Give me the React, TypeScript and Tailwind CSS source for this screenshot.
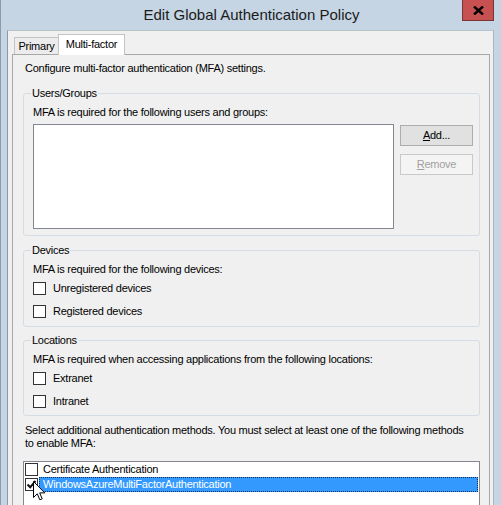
import React from "react";

function Box({ checked = false }: { checked?: boolean }) {
  return (
    <span className="w-[13px] h-[13px] shrink-0 border border-[#333333] bg-white flex items-center justify-center">
      {checked && (
        <svg width="11" height="11" viewBox="0 0 11 11">
          <path d="M1.5 5.5 L4.2 8.3 L9.5 2" fill="none" stroke="#111" strokeWidth="2" />
        </svg>
      )}
    </span>
  );
}

function Row({ label }: { label: string }) {
  return (
    <div className="h-[23px] flex items-center gap-[7px]">
      <Box />
      <span>{label}</span>
    </div>
  );
}

function Group({ title, className, children }: { title: string; className?: string; children: React.ReactNode }) {
  return (
    <fieldset className={"border border-[#d5dce3] rounded-[3px] pl-[9px] pr-[6px] " + (className ?? "")}>
      <legend className="ml-[-2px] px-[1px] leading-[13px]">{title}</legend>
      {children}
    </fieldset>
  );
}

export default function App() {
  return (
    <div className="relative w-[501px] h-[505px] overflow-hidden bg-[#c5d5e4] border-l border-[#8d9bab] flex flex-col font-['Liberation_Sans',Arial,sans-serif] text-[11px] tracking-[-0.25px] text-black">
      {/* title bar */}
      <div className="h-[30px] shrink-0 flex items-start">
        <div className="flex-1 pl-[40px] pt-[5px] text-center text-[15px] tracking-normal leading-[20px] text-[#1b1b1b]">
          Edit Global Authentication Policy
        </div>
        <div className="w-[32px] h-[21px] mr-[7px] bg-[#c75050] border border-t-0 border-[#7a3434] flex items-center justify-center">
          <svg width="11" height="9" viewBox="0 0 11 9">
            <path d="M1 0.5 L10 8.5 M10 0.5 L1 8.5" stroke="#000" strokeWidth="2.4" />
          </svg>
        </div>
      </div>

      {/* client area */}
      <div className="flex-1 ml-[6px] mr-[7px] bg-[#f0f0f0] border-l border-r border-t border-l-[#8e99a5] border-r-[#a9b4bf] border-t-[#b9c3cc] flex flex-col pt-[3px]">
        {/* tabs */}
        <div className="flex items-end pl-[6px] h-[20px]">
          <div className="w-[44px] h-[17px] bg-[#ececec] border-t border-l border-[#c4c4c4] flex items-center justify-center pt-[1px]">
            Primary
          </div>
          <div className="relative z-10 w-[67px] h-[21px] mb-[-1px] bg-white border-t border-l border-r border-[#c4c4c4] flex items-start justify-center pt-[3px] leading-[13px]">
            Multi-factor
          </div>
        </div>

        {/* tab page */}
        <div className="flex-1 ml-[4px] mr-[3px] border border-b-0 border-[#a8a8a8] pl-[10px] pr-[9px] pt-[7px] leading-[13px]">
          <div className="pl-[2px]">Configure multi-factor authentication (MFA) settings.</div>

          <Group title="Users/Groups" className="mt-[12px] pb-[6px]">
            <div className="mt-[6px]">MFA is required for the following users and groups:</div>
            <div className="mt-[5px] flex gap-[6px]">
              <div className="w-[361px] h-[105px] bg-white border border-[#828790]" />
              <div className="flex flex-col gap-[8px] pt-[1px]">
                <div className="w-[73px] h-[21px] bg-[#e1e1e1] border border-[#adadad] flex items-center justify-center">
                  <span>
                    <span className="underline">A</span>dd...
                  </span>
                </div>
                <div className="w-[73px] h-[21px] bg-[#f4f4f4] border border-[#c9c9c9] text-[#a0a0a0] flex items-center justify-center">
                  <span>
                    <span className="underline">R</span>emove
                  </span>
                </div>
              </div>
            </div>
          </Group>

          <Group title="Devices" className="mt-[8px] pb-[3px]">
            <div className="mt-[6px] mb-[1px]">MFA is required for the following devices:</div>
            <Row label="Unregistered devices" />
            <Row label="Registered devices" />
          </Group>

          <Group title="Locations" className="mt-[7px] pb-[2px]">
            <div className="mt-[6px] mb-[1px]">
              MFA is required when accessing applications from the following locations:
            </div>
            <Row label="Extranet" />
            <Row label="Intranet" />
          </Group>

          <div className="mt-[8px] pl-[2px]">
            Select additional authentication methods. You must select at least one of the following methods
            <br />
            to enable MFA:
          </div>

          <div className="mt-[11px] h-[60px] bg-white border border-[#828790] pl-[1px] pr-[1px]">
            <div className="h-[15px] flex items-center">
              <Box />
              <span className="pl-[5px]">Certificate Authentication</span>
            </div>
            <div className="h-[15px] flex items-center">
              <Box checked />
              <div className="ml-[1px] flex-1 h-[15px] bg-[#3399ff] border border-dotted border-[#0b2d5c] text-white pl-[3px] flex items-center">
                WindowsAzureMultiFactorAuthentication
              </div>
            </div>
          </div>
        </div>
      </div>

      {/* mouse pointer */}
      <svg className="absolute left-[32px] top-[481px]" width="13" height="21" viewBox="0 0 13 21">
        <path
          d="M0.5 0.5 L0.5 16.5 L4.3 12.8 L6.8 18.8 L9.2 17.8 L6.7 11.9 L11.8 11.9 Z"
          fill="#fff"
          stroke="#000"
          strokeWidth="1"
          strokeLinejoin="miter"
        />
      </svg>
    </div>
  );
}
